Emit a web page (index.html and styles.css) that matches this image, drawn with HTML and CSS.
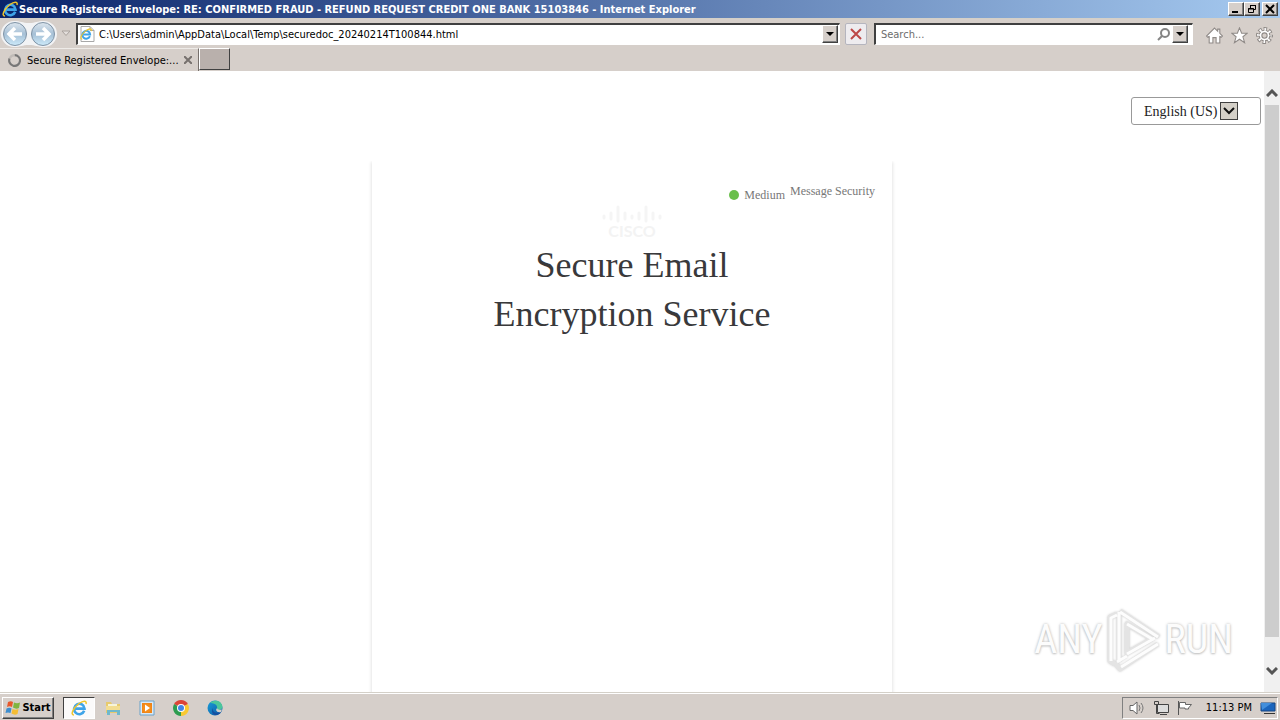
FILE: index.html
```html
<!DOCTYPE html>
<html lang="en">
  <head>
    <meta charset="UTF-8" />
    <meta name="viewport" content="width=device-width, initial-scale=1.0" />
    <title>Secure Registered Envelope</title>
    <link rel="stylesheet" href="styles.css">
  </head>
  <body>
    <svg class="defs" width="0" height="0" aria-hidden="true">
      <defs>
        <linearGradient id="nav-fill" x1="0" y1="0" x2="0" y2="1">
          <stop offset="0" stop-color="#dde6ee" />
          <stop offset="0.5" stop-color="#a6c0d6" />
          <stop offset="1" stop-color="#cdeafa" />
        </linearGradient>
        <linearGradient id="edge-fill" x1="0" y1="0" x2="1" y2="1">
          <stop offset="0" stop-color="#1a9fd8" />
          <stop offset="1" stop-color="#0b55a5" />
        </linearGradient>
        <symbol id="ie" viewBox="0 0 16 16">
          <path d="M13.2 10.8A5.2 5.2 0 1 1 13.5 8.6H4.500" fill="none" stroke="#3fa4e8" stroke-width="2.600" />
          <path d="M3 15C-1 15 2 8 8 3.500C12 .5 16 0 15 4" fill="none" stroke="#efc52b" stroke-width="1.500" />
        </symbol>
      </defs>
    </svg>

    <header class="titlebar">
      <svg class="icon" viewBox="0 0 16 16"><use href="#ie" /></svg>
      <span class="title">Secure Registered Envelope: RE: CONFIRMED FRAUD - REFUND REQUEST CREDIT ONE BANK 15103846 - Internet Explorer</span>
      <div class="window-buttons">
        <button aria-label="Minimize"><svg viewBox="0 0 12 10"><path d="M2 8h6" stroke="#000" stroke-width="2" /></svg></button>
        <button aria-label="Restore"><svg viewBox="0 0 12 10"><path d="M4.500 4V1.500h5v4H8M4 1.500h6M2.500 4.500h5v4h-5zM2 5h6" fill="none" stroke="#000" /></svg></button>
        <button class="close" aria-label="Close"><svg viewBox="0 0 12 10"><path d="M2 1l8 8M10 1L2 9" stroke="#000" stroke-width="2" /></svg></button>
      </div>
    </header>

    <nav class="toolbar">
      <button class="nav-buttons" aria-label="Back and forward">
        <svg viewBox="0 0 56 26">
          <path d="M13 0C20 0 21 2 28 2S36 0 43 0a13 13 0 0 1 0 26C36 26 35 24 28 24S20 26 13 26A13 13 0 0 1 13 0z" fill="#f2f3f5" />
          <circle cx="14" cy="13" r="11.500" fill="url(#nav-fill)" stroke="#7f93a6" />
          <circle cx="42" cy="13" r="11.500" fill="url(#nav-fill)" stroke="#7f93a6" />
          <path d="M21 13H8M14 7l-6 6 6 6M35 13h13M42 7l6 6-6 6" fill="none" stroke="#fff" stroke-width="3.500" />
        </svg>
      </button>
      <button class="history" aria-label="Recent pages"><svg viewBox="0 0 10 7"><path d="M1 1h8L5 5.500z" fill="#e3dedb" stroke="#aaa29e" /></svg></button>
      <div class="field address">
        <svg class="icon" viewBox="0 0 16 16"><path d="M2 .5h9l4 4v11H2z" fill="#fff" stroke="#a8a8a8" /><path d="M11 .5v4h4" fill="none" stroke="#a8a8a8" /><use href="#ie" x="1" y="2" width="12" height="12" /></svg>
        <input type="text" aria-label="Address" value="C:\Users\admin\AppData\Local\Temp\securedoc_20240214T100844.html">
        <button class="drop" aria-label="Show address history"><svg viewBox="0 0 8 4"><path d="M0 0h8L4 4z" /></svg></button>
      </div>
      <button class="stop" aria-label="Stop"><svg viewBox="0 0 12 12"><path d="M1 1l10 10M11 1L1 11" stroke="#bd4747" stroke-width="2" /></svg></button>
      <div class="field search">
        <input type="text" aria-label="Search" placeholder="Search...">
        <svg class="glass" viewBox="0 0 13 13"><circle cx="8" cy="5" r="4" fill="none" stroke="#858585" stroke-width="2" /><path d="M5 8l-4 4" stroke="#858585" stroke-width="2" /></svg>
        <button class="drop" aria-label="Search options"><svg viewBox="0 0 8 4"><path d="M0 0h8L4 4z" /></svg></button>
      </div>
      <div class="tools">
        <button aria-label="Home"><svg viewBox="0 0 16 16"><path d="M8 1l3 3V2h2v4l2.500 2.500-1 1L13 9v6H9.500v-5h-3v5H3V9l-1.500.5-1-1z" fill="#fff" stroke="#8f8a87" /></svg></button>
        <button aria-label="Favorites"><svg viewBox="0 0 16 16"><path d="M8 .8l2 5h5.300L11.200 9.200l1.600 5.600L8 11.500l-4.800 3.300 1.600-5.600L.7 5.800H6z" fill="#fff" stroke="#8f8a87" /></svg></button>
        <button aria-label="Tools"><svg viewBox="0 0 16 16"><circle cx="8" cy="8" r="6" fill="none" stroke="#8f8a87" stroke-width="4" stroke-dasharray="3 1.712" stroke-dashoffset="1.500" /><circle cx="8" cy="8" r="5" fill="#fff" stroke="#8f8a87" /><circle cx="8" cy="8" r="5.700" fill="none" stroke="#fff" stroke-width="2.800" stroke-dasharray="1.500 2.977" stroke-dashoffset=".75" /><circle cx="8" cy="8" r="2.500" fill="#d6cfca" stroke="#8f8a87" /></svg></button>
      </div>
    </nav>

    <div class="tabs">
      <div class="tab">
        <svg class="spinner" viewBox="0 0 12 12"><path d="M6 1a5 5 0 1 1-4.500 3" fill="none" stroke="#777" stroke-width="2" /><path d="M1.500 4A5 5 0 0 1 6 1" fill="none" stroke="#c0bbb7" stroke-width="2" /></svg>
        <span>Secure Registered Envelope:...</span>
        <button aria-label="Close tab"><svg viewBox="0 0 8 8"><path d="M0 0l8 8M8 0L0 8" stroke="#77716e" stroke-width="2" /></svg></button>
      </div>
      <button class="new-tab" aria-label="New tab"></button>
    </div>

    <div class="viewport">
      <main>
        <div class="language">
          <select aria-label="Language">
            <option>English (US)</option>
          </select>
          <span class="arrow"><svg viewBox="0 0 12 8"><path d="M1 1l5 5 5-5" fill="none" stroke="#111" stroke-width="2" /></svg></span>
        </div>
        <section class="envelope">
          <div class="security">
            <span class="level"><i class="dot"></i>Medium</span>
            <span>Message Security</span>
          </div>
          <svg class="cisco" viewBox="0 0 60 34">
            <path d="M2 11v2M9 8v6M16 2v14M23 8v6M30 11v2M37 8v6M44 2v14M51 8v6M58 11v2" stroke="#f5f5f5" stroke-width="3" stroke-linecap="round" />
            <text x="30" y="32" text-anchor="middle">CISCO</text>
          </svg>
          <h1>Secure Email<br>Encryption Service</h1>
        </section>
        <div class="watermark">
          <span>ANY</span>
          <svg viewBox="0 0 58 64">
            <g fill="none" stroke-linejoin="round">
              <path d="M12 6L5 9v44l5 3M14 4v50M15 3l39 26M22 16v29l25-14zM10 55l5 6 38-25" stroke="#e4e4e4" stroke-width="5" />
              <path d="M12 7L6 10v43M14 4v50M15 4l38 25M22 16l27 16M22 46l28-16M16 59l37-23M12 54l10-6" stroke="#fdfdfd" stroke-width="3" />
            </g>
          </svg>
          <span>RUN</span>
        </div>
      </main>
      <div class="scrollbar">
        <svg viewBox="0 0 12 8"><path d="M1 7l5-5 5 5" fill="none" stroke="#555" stroke-width="3" /></svg>
        <div class="thumb"></div>
        <svg viewBox="0 0 12 8"><path d="M1 1l5 5 5-5" fill="none" stroke="#555" stroke-width="3" /></svg>
      </div>
    </div>

    <footer class="taskbar">
      <button class="start">
        <svg viewBox="0 0 16 16">
          <path d="M3 2q3-1.500 5 0L7 7Q4.500 5.500 2 7z" fill="#e8582b" />
          <path d="M9 2.500q3 1.500 6 0L14 8q-3 1.500-6-.5z" fill="#80b541" />
          <path d="M1.500 8.500q3-1.500 5 0L5.500 13Q3 12 .5 13z" fill="#3d8ed0" />
          <path d="M7.500 9q3 1.500 6 0l-1 5q-3 1.500-6-.5z" fill="#f4bd35" />
        </svg>
        Start
      </button>
      <div class="apps">
        <button class="active" aria-label="Internet Explorer"><svg viewBox="0 0 16 16"><use href="#ie" /></svg></button>
        <button aria-label="Windows Explorer"><svg viewBox="0 0 16 16"><path d="M1 2h5l1 2h8v9H1z" fill="#e7ca6d" /><path d="M3 4h9v5H3z" fill="#f7f4d8" /><path d="M2 8h13v7h-3v-3H5v3H2z" fill="#6fb8cc" /><path d="M1 6h14v4H1z" fill="#f3dd91" /></svg></button>
        <button aria-label="Media Player"><svg viewBox="0 0 16 16"><path d="M1 1h14v14H1z" fill="#d9e9f6" stroke="#6ba2cb" /><path d="M3 3h10v10H3z" fill="#ef8418" /><circle cx="8" cy="8" r="4.500" fill="#f58e1c" /><path d="M6 4.500l5 3.500-5 3.500z" fill="#fff" /></svg></button>
        <button aria-label="Chrome"><svg viewBox="0 0 16 16"><path d="M8 8L1.100 4A8 8 0 0 1 14.900 4z" fill="#dc4437" /><path d="M8 8l6.900-4A8 8 0 0 1 8 16z" fill="#f9c932" /><path d="M8 8v8A8 8 0 0 1 1.100 4z" fill="#2d9c50" /><circle cx="8" cy="8" r="4" fill="#fff" /><circle cx="8" cy="8" r="3" fill="#4285e8" /></svg></button>
        <button aria-label="Edge"><svg viewBox="0 0 16 16"><circle cx="8" cy="8" r="7.500" fill="url(#edge-fill)" /><path d="M3 3C7-1 15 0 15.500 7c0 3-5 4-5.500 2C11 4 6 3 3 3z" fill="#4bc69c" /><path d="M6 8c-1 4 3 6 8 4-2 3-6 4-8 2Q4 11 6 8z" fill="#174fa0" /><path d="M10 8q0 2.500 5 1.500l-1 2.500q-4 1-5-2z" fill="#d6cfca" /></svg></button>
      </div>
      <div class="tray">
        <svg viewBox="0 0 16 16"><path d="M1 5.500h3L8 2v12l-4-3.500H1z" fill="#fff" stroke="#666" /><path d="M10 5q2 3 0 6M12 3q4 5 0 10" fill="none" stroke="#777" /></svg>
        <svg viewBox="0 0 16 16"><path d="M4.500 4.500h11v8h-11z" fill="#ddd" stroke="#444" /><path d="M7 14.500h7" stroke="#444" /><path d="M1.500 1.500h4v3h-4zM3.500 5v8.500h3" fill="none" stroke="#444" /></svg>
        <svg viewBox="0 0 16 16"><path d="M1.500 1v14" stroke="#555" /><path d="M2.500 2.500h6v2h6l-3 3.500v1H8V8H2.500z" fill="#fff" stroke="#666" /></svg>
        <time>11:13 PM</time>
        <svg viewBox="0 0 16 16"><path d="M1 3h14v8H1z" fill="#1b65bd" stroke="#174783" /><path d="M1 3h11L2 10z" fill="#438fdc" /><path d="M4 13.500h11" stroke="#333" /></svg>
      </div>
    </footer>
  </body>
</html>
```

FILE: styles.css
```css
* {
  box-sizing: border-box;
}

body {
  margin: 0;
  height: 100vh;
  display: flex;
  flex-direction: column;
  overflow: hidden;
  background: #fff;
  color: #000;
  font-family: Tahoma, "DejaVu Sans Condensed", "DejaVu Sans", sans-serif;
  font-size: 11px;
}

.defs {
  position: absolute;
}

button {
  display: flex;
  align-items: center;
  justify-content: center;
  flex-shrink: 0;
  padding: 0;
  border: none;
  background: none;
  color: #000;
  font: inherit;
}

svg {
  display: block;
  flex-shrink: 0;
}

.icon {
  width: 16px;
  height: 16px;
}

.titlebar {
  display: flex;
  align-items: center;
  flex-shrink: 0;
  height: 18px;
  padding: 0 2px;
  background: linear-gradient(to right, #0a246a, #a6caf0);
  color: #fff;
  font-weight: bold;
}

.title {
  flex: 1;
  padding-left: 1px;
  white-space: nowrap;
  overflow: hidden;
}

.window-buttons {
  display: flex;
}

.window-buttons button,
.drop,
.start {
  border: 1px solid;
  border-color: #fff #404040 #404040 #fff;
  box-shadow: inset -1px -1px #808080;
  background: #d6cfca;
}

.window-buttons button {
  width: 16px;
  height: 14px;
}

.window-buttons .close {
  margin-left: 2px;
}

.window-buttons svg {
  width: 12px;
  height: 10px;
}

.toolbar {
  display: flex;
  align-items: center;
  flex-shrink: 0;
  height: 30px;
  padding: 0 6px 0 1px;
  border-top: 1px solid #d4d0c8;
  background: #d6cfca;
}

.nav-buttons svg {
  width: 56px;
  height: 26px;
}

.history {
  width: 18px;
  margin-right: 1px;
}

.history svg {
  width: 10px;
  height: 7px;
}

.field {
  display: flex;
  align-items: center;
  height: 22px;
  padding: 0 1px;
  border: 1px solid;
  border-color: #404040 #fff #fff #404040;
  border-width: 2px 1px 1px 2px;
  background: #fff;
}

.field input {
  flex: 1;
  min-width: 0;
  padding: 0 4px;
  border: none;
  outline: none;
  background: none;
  color: #000;
  font: inherit;
}

.field input::placeholder {
  color: #6d6d6d;
}

.address {
  flex: 766;
}

.search {
  flex: 317;
}

.drop {
  width: 16px;
  height: 18px;
}

.drop svg {
  width: 8px;
  height: 4px;
}

.stop {
  width: 22px;
  height: 22px;
  margin: 0 7px 0 5px;
  border: 1px solid #b5b5be;
  border-radius: 2px;
  background: #eeecef;
}

.stop svg {
  width: 12px;
  height: 12px;
}

.glass {
  width: 13px;
  height: 13px;
  margin-right: 2px;
}

.search .drop {
  margin-right: 3px;
}

.tools {
  display: flex;
  gap: 8px;
  padding: 3px 1px 0 13px;
}

.tools svg {
  width: 17px;
  height: 17px;
}

.tabs {
  display: flex;
  flex-shrink: 0;
  height: 23px;
  background: #d6cfca;
}

.tab {
  display: flex;
  align-items: center;
  width: 199px;
  padding-left: 8px;
  border-top: 1px solid #eeebe8;
  border-right: 1px solid #77706c;
}

.tab span {
  flex: 1;
  padding-left: 6px;
  white-space: nowrap;
}

.tab button {
  margin-right: 6px;
}

.tab button svg {
  width: 8px;
  height: 8px;
}

.spinner {
  width: 13px;
  height: 13px;
}

.new-tab {
  width: 31px;
  height: 22px;
  border: 1px solid;
  border-color: #fff #404040 #404040 #fff;
  background: #b9b0ac;
}

.viewport {
  display: flex;
  flex: 1;
  min-height: 0;
}

main {
  position: relative;
  display: flex;
  flex-direction: column;
  flex: 1;
  padding-top: 26px;
  overflow: hidden;
  font-family: "Liberation Serif", "Times New Roman", serif;
}

.language {
  display: flex;
  align-items: center;
  align-self: flex-end;
  width: 130px;
  height: 28px;
  margin-right: 3px;
  padding-left: 12px;
  border: 1px solid #999;
  border-radius: 3px;
}

.language select {
  appearance: none;
  width: 76px;
  padding: 0;
  border: none;
  background: none;
  color: #222;
  font: 14px "Liberation Serif", serif;
}

.arrow {
  display: flex;
  align-items: center;
  justify-content: center;
  width: 18px;
  height: 18px;
  border: 1px solid #404040;
  background: #d4d0c8;
  pointer-events: none;
}

.arrow svg {
  width: 12px;
  height: 8px;
}

.envelope {
  display: flex;
  flex-direction: column;
  align-items: center;
  flex: 1;
  width: 520px;
  max-width: 100%;
  margin: 36px auto 0;
  padding-top: 22px;
  box-shadow: 0 2px 3px 1px #e6e6e6;
  clip-path: inset(0 -8px);
}

.security {
  display: flex;
  align-self: flex-end;
  gap: 5px;
  padding-right: 17px;
  color: #777;
  font-size: 12px;
  line-height: 16px;
}

.level {
  display: flex;
  align-items: center;
  gap: 5px;
  padding-top: 4px;
}

.dot {
  width: 10px;
  height: 10px;
  border-radius: 50%;
  background: #6abf4b;
}

.cisco {
  width: 60px;
  height: 34px;
  margin-top: 2px;
}

.cisco text {
  fill: #f3f3f3;
  font: bold 16px Lato, sans-serif;
}

h1 {
  margin: 2px 0 0;
  color: #39393b;
  font-size: 36px;
  font-weight: normal;
  line-height: 49px;
  text-align: center;
}

.watermark {
  position: absolute;
  right: 31px;
  bottom: 20px;
  display: flex;
  align-items: center;
  gap: 2px;
  color: #fcfcfc;
  font: 40px "Liberation Sans Narrow", "Roboto Condensed", "Open Sans Condensed", sans-serif;
  line-height: 64px;
  text-shadow: 0 0 3px #bbb, 0 1px 2px #ccc;
}

.watermark svg {
  width: 58px;
  height: 64px;
  filter: drop-shadow(0 0 1px #ccc);
}

.scrollbar {
  display: flex;
  flex-direction: column;
  align-items: center;
  width: 16px;
  padding: 18px 0 17px;
  background: #f0f0f0;
}

.scrollbar svg {
  width: 12px;
  height: 8px;
}

.thumb {
  flex: 1;
  width: 14px;
  margin: 8px 0 30px;
  background: #cdcdcd;
}

.taskbar {
  display: flex;
  align-items: center;
  flex-shrink: 0;
  height: 28px;
  padding: 2px 2px 0;
  border-top: 1px solid #d4d0c8;
  box-shadow: inset 0 1px #fff;
  background: #d6cfca;
}

.start {
  width: 52px;
  height: 22px;
  gap: 1px;
  font-weight: bold;
}

.start svg {
  width: 16px;
  height: 16px;
}

.apps {
  display: flex;
  gap: 2px;
  flex: 1;
  padding-left: 9px;
}

.apps button {
  width: 32px;
  height: 22px;
}

.apps .active {
  border: 1px solid;
  border-color: #404040 #fff #fff #404040;
  background: #fbfafa;
}

.apps svg {
  width: 16px;
  height: 16px;
}

.tray {
  display: flex;
  align-items: center;
  gap: 8px;
  height: 22px;
  padding: 0 1px 0 6px;
  border: 1px solid;
  border-color: #808080 #fff #fff #808080;
}

.tray svg {
  width: 16px;
  height: 16px;
}

.tray time {
  padding-left: 5px;
}
```
